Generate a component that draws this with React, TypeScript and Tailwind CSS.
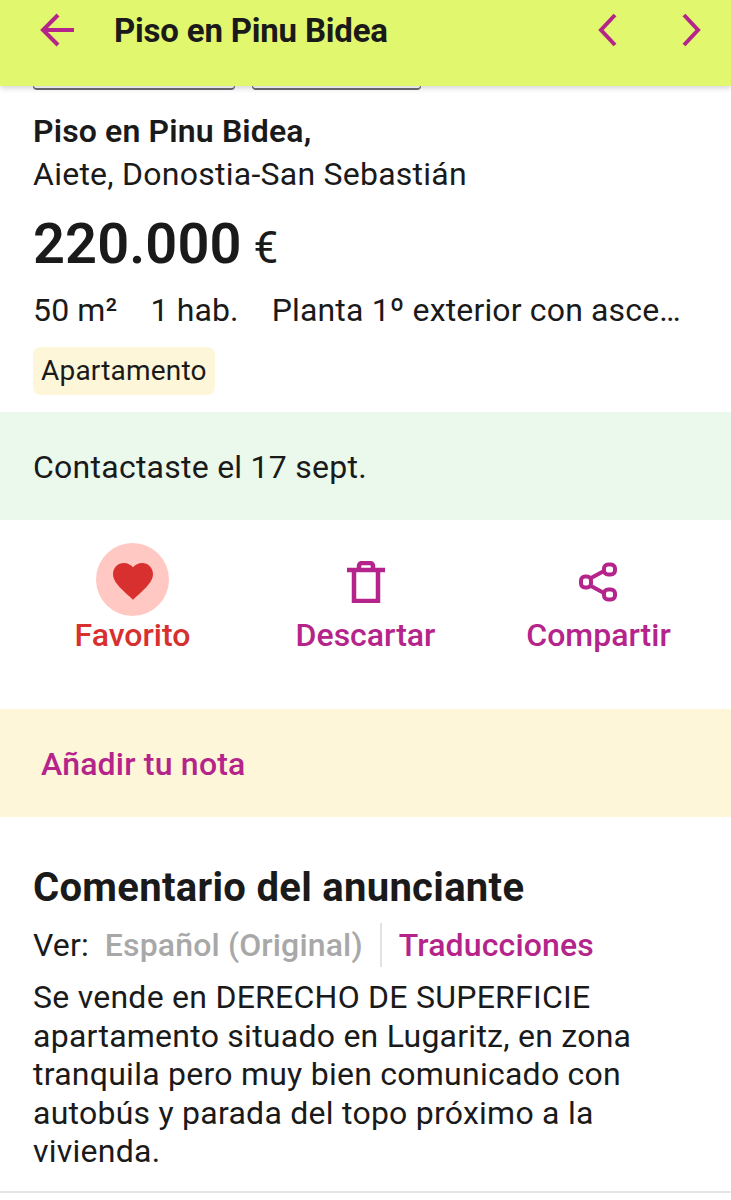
function BackArrow() {
  return (
    <svg viewBox="0 0 36 36" className="w-[36px] h-[36px] fill-none stroke-[#b5248a] stroke-[4]">
      <path d="M35 18H4" />
      <path d="M19 3L4 18l15 15" />
    </svg>
  );
}

function Chevron({ flip }: { flip?: boolean }) {
  return (
    <svg viewBox="0 0 20 34" className="w-[20px] h-[34px] fill-none stroke-[#b5248a] stroke-[4]">
      <path d={flip ? "M3 2l14 15L3 32" : "M17 2L3 17l14 15"} />
    </svg>
  );
}

function Heart() {
  return (
    <svg viewBox="0 0 24 24" className="w-[48px] h-[48px] fill-[#d8302f]">
      <path d="M12 21.35l-1.45-1.32C5.4 15.36 2 12.28 2 8.5 2 5.42 4.42 3 7.5 3c1.74 0 3.41.81 4.5 2.09C13.09 3.81 14.76 3 16.5 3 19.58 3 22 5.42 22 8.5c0 3.78-3.4 6.86-8.55 11.54L12 21.35z" />
    </svg>
  );
}

function Trash() {
  return (
    <svg viewBox="0 0 38 42" className="w-[38px] h-[42px] fill-none stroke-[#b5248a] stroke-[4.5]">
      <path d="M0 9h38" />
      <path d="M12 8V5a3 3 0 0 1 3-3h8a3 3 0 0 1 3 3v3" />
      <path d="M7 9v31h24V9" />
    </svg>
  );
}

function Share() {
  return (
    <svg viewBox="0 0 40 40" className="w-[40px] h-[40px] fill-none stroke-[#b5248a] stroke-[4]">
      <rect x="2" y="14.5" width="10" height="11" rx="4" />
      <rect x="25" y="2.5" width="11" height="10" rx="4" />
      <rect x="25" y="27.5" width="11" height="10" rx="4" />
      <path d="M12 16l13-7M12 24l13 7" />
    </svg>
  );
}

export default function App() {
  return (
    <div className="w-[731px] h-[1200px] overflow-hidden bg-white font-['Roboto',sans-serif] text-[#1a1a1a]">
      {/* header */}
      <div className="relative z-10 h-[86px] bg-[#e1f76e] shadow-[0_2px_6px_rgba(0,0,0,0.18)] flex items-start pt-[8px] pl-[39px] pr-[30px]">
        <div className="h-[44px] flex items-center">
          <BackArrow />
        </div>
        <h1 className="ml-[39px] h-[45px] flex items-center text-[33px] font-bold tracking-[-0.2px] flex-1">
          Piso en Pinu Bidea
        </h1>
        <div className="h-[44px] flex items-center gap-[63px]">
          <Chevron />
          <Chevron flip />
        </div>
      </div>

      {/* chips hidden below the header */}
      <div className="flex gap-[17px] pl-[33px] h-[4px]">
        <div className="w-[202px] border-b-2 border-x border-[#6b6b73] rounded-b-[4px]" />
        <div className="w-[169px] border-b-2 border-x border-[#6b6b73] rounded-b-[4px]" />
      </div>

      {/* summary */}
      <div className="px-[33px] pt-[20px]">
        <p className="text-[32px] leading-[42px] font-semibold tracking-[0.15px]">Piso en Pinu Bidea,</p>
        <p className="text-[32px] leading-[44px] tracking-[0.25px]">Aiete, Donostia-San Sebastián</p>
        <p className="mt-[13px] leading-[70px] flex items-baseline">
          <span className="text-[56px] font-semibold tracking-[0.1px]">220.000</span>
          <span className="ml-[12px] text-[44px]">€</span>
        </p>
        <div className="mt-[7px] flex text-[32px] leading-[40px] tracking-[0.15px]">
          <span>50 m²</span>
          <span className="ml-[33px]">1 hab.</span>
          <span className="ml-[33px] whitespace-nowrap">Planta 1º exterior con asce…</span>
        </div>
        <span className="mt-[17px] inline-block rounded-[8px] bg-[#fdf6d9] px-[8px] text-[28px] leading-[48px] tracking-[0.2px]">
          Apartamento
        </span>
      </div>

      {/* contacted */}
      <div className="mt-[17px] h-[108px] pt-[2px] bg-[#ebf9ec] flex items-center px-[33px] text-[32px] tracking-[0.25px]">
        Contactaste el 17 sept.
      </div>

      {/* actions */}
      <div className="h-[189px] grid grid-cols-[233px_233px_233px] pl-[16px] pt-[23px] text-[32px] leading-[38px] font-medium text-[#b5248a]">
        <div className="flex flex-col items-center">
          <div className="w-[73px] h-[73px] pt-[3px] rounded-full bg-[#ffc8c2] flex items-center justify-center">
            <Heart />
          </div>
          <span className="text-[#d8302f]">Favorito</span>
        </div>
        <div className="flex flex-col items-center">
          <div className="h-[73px] pt-[4px] flex items-center justify-center">
            <Trash />
          </div>
          <span>Descartar</span>
        </div>
        <div className="flex flex-col items-center">
          <div className="h-[73px] pt-[4px] flex items-center justify-center">
            <Share />
          </div>
          <span>Compartir</span>
        </div>
      </div>

      {/* note */}
      <div className="h-[108px] pt-[2px] bg-[#fdf6d9] flex items-center px-[41px] text-[32px] tracking-[0.2px] font-medium text-[#b5248a]">
        Añadir tu nota
      </div>

      {/* comment */}
      <div className="px-[33px] pt-[45px] pb-[20px] border-b-2 border-[#e4e4e4]">
        <h2 className="text-[40px] leading-[52px] font-bold tracking-[0.3px]">Comentario del anunciante</h2>
        <div className="mt-[8px] flex items-center text-[32px] tracking-[0.15px] h-[46px]">
          <span>Ver:</span>
          <span className="ml-[16px] font-medium text-[#a8a8a8]">Español (Original)</span>
          <span className="ml-[17px] w-[2px] h-[44px] bg-[#e2e2e2]" />
          <span className="ml-[17px] font-medium text-[#b5248a]">Traducciones</span>
        </div>
        <p className="text-[32px] leading-[38.6px] tracking-[0.25px] mt-[10px]">
          Se vende en DERECHO DE SUPERFICIE apartamento situado en Lugaritz, en zona tranquila pero muy bien comunicado con autobús y parada del topo próximo a la vivienda.
        </p>
      </div>
    </div>
  );
}
